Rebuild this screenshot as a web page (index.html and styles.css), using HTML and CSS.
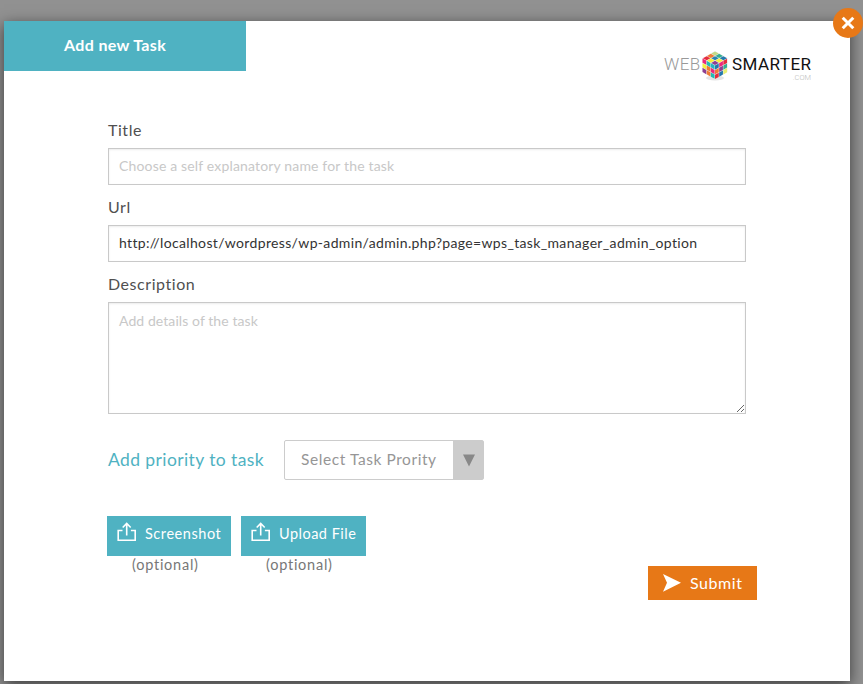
FILE: index.html
```html
<!DOCTYPE html>
<html lang="en">
<head>
<meta charset="utf-8">
<title>Add new Task</title>
<link rel="stylesheet" href="styles.css">
</head>
<body>
<div class="modal">
  <button class="close" aria-label="Close"><svg width="14" height="14" viewBox="0 0 14 14"><path d="M1.700 1.700l10.600 10.600M12.300 1.700L1.700 12.300" stroke="#fff" stroke-width="3" fill="none"/></svg></button>
  <header class="header">
    <h1 class="tab"><span>Add new Task</span></h1>
    <div class="logo">
      <span class="logo-web">WEB</span>
      <svg class="cube" width="26" height="30" viewBox="0 0 26 30">
        <ellipse cx="13" cy="27" rx="9" ry="2.5" fill="#e4e4e4"/>
        <path d="M13 0l12.5 7v14L13 28.500.5 21V7z" fill="#f2f2f2"/>
        <g transform="matrix(4.17 2.33 -4.17 2.33 13 .5)">
          <rect width=".9" height=".9" fill="#c3d987"/><rect x="1" width=".9" height=".9" fill="#35ad91"/><rect x="2" width=".9" height=".9" fill="#2378ad"/>
          <rect y="1" width=".9" height=".9" fill="#ef7b35"/><rect x="1" y="1" width=".9" height=".9" fill="#2882b0"/><rect x="2" y="1" width=".9" height=".9" fill="#f6ef3c"/>
          <rect y="2" width=".9" height=".9" fill="#e62d3d"/><rect x="1" y="2" width=".9" height=".9" fill="#f6ef3c"/><rect x="2" y="2" width=".9" height=".9" fill="#8d3f92"/>
        </g>
        <g transform="matrix(4.17 2.33 0 4.67 .5 7.500)">
          <rect width=".9" height=".9" fill="#ec287c"/><rect x="1" width=".9" height=".9" fill="#25b9b4"/><rect x="2" width=".9" height=".9" fill="#24b4c2"/>
          <rect y="1" width=".9" height=".9" fill="#f6ef3c"/><rect x="1" y="1" width=".9" height=".9" fill="#ef7b35"/><rect x="2" y="1" width=".9" height=".9" fill="#ec287c"/>
          <rect y="2" width=".9" height=".9" fill="#8d3f92"/><rect x="1" y="2" width=".9" height=".9" fill="#ef7b35"/><rect x="2" y="2" width=".9" height=".9" fill="#25b9b4"/>
        </g>
        <g transform="matrix(4.17 -2.33 0 4.67 13 14.500)">
          <rect width=".9" height=".9" fill="#2378ad"/><rect x="1" width=".9" height=".9" fill="#ec287c"/><rect x="2" width=".9" height=".9" fill="#e62d3d"/>
          <rect y="1" width=".9" height=".9" fill="#ef7b35"/><rect x="1" y="1" width=".9" height=".9" fill="#8d3f92"/><rect x="2" y="1" width=".9" height=".9" fill="#35ad91"/>
          <rect y="2" width=".9" height=".9" fill="#e62d3d"/><rect x="1" y="2" width=".9" height=".9" fill="#2378ad"/><rect x="2" y="2" width=".9" height=".9" fill="#e7ee70"/>
        </g>
      </svg>
      <span class="logo-smarter">SMARTER</span>
      <span class="logo-com">.COM</span>
    </div>
  </header>
  <form class="form">
    <label class="label l-title" for="title">Title</label>
    <input class="field" id="title" type="text" placeholder="Choose a self explanatory name for the task">
    <label class="label" for="url">Url</label>
    <input class="field url" id="url" type="text" value="http://localhost/wordpress/wp-admin/admin.php?page=wps_task_manager_admin_option">
    <label class="label l-desc" for="desc">Description</label>
    <textarea class="field area" id="desc" placeholder="Add details of the task"></textarea>
    <div class="priority">
      <span class="priority-label">Add priority to task</span>
      <div class="select"><span class="select-text">Select Task Prority</span><span class="arrow"><svg width="12" height="13" viewBox="0 0 12 13"><path d="M0 .5h12L6 12.500z" fill="#888"/></svg></span></div>
    </div>
    <div class="actions">
      <div class="upload">
        <button type="button" class="upload-btn"><svg width="20" height="20" viewBox="0 0 20 20"><path d="M5.500 8.500H1.200v9.800h17V8.500h-4.300M9.700 13.500V2M5.700 5.500l4-4 4 4" fill="none" stroke="#fff" stroke-width="1.600"/></svg><span>Screenshot</span></button>
        <span class="optional">(optional)</span>
      </div>
      <div class="upload second">
        <button type="button" class="upload-btn"><svg width="20" height="20" viewBox="0 0 20 20"><path d="M5.500 8.500H1.200v9.800h17V8.500h-4.300M9.700 13.500V2M5.700 5.500l4-4 4 4" fill="none" stroke="#fff" stroke-width="1.600"/></svg><span class="t-file">Upload File</span></button>
        <span class="optional">(optional)</span>
      </div>
      <button type="button" class="submit"><svg width="18" height="18" viewBox="0 0 18 18"><path d="M0 0l18 8.800L0 17.800l4-9z" fill="#fff"/></svg><span>Submit</span></button>
    </div>
  </form>
</div>
</body>
</html>
```
FILE: styles.css
```css
* { box-sizing: border-box; }
html, body { height: 100%; overflow: hidden; }
body { margin: 0; padding: 21px 0 0 4px; background: #919191; font-family: Lato, "Liberation Sans", sans-serif; }
button { border: 0; font: inherit; color: #fff; }
.modal { position: relative; width: 846px; height: 660px; background: #fff; box-shadow: 0 4px 14px rgba(0,0,0,.6); }
.close { position: absolute; right: -13px; top: -13px; width: 30px; height: 30px; padding: 0; border-radius: 50%; background: #e77817; display: flex; align-items: center; justify-content: center; }
.header { display: flex; justify-content: space-between; height: 100px; padding-right: 38px; }
.tab { margin: 0; width: 242px; height: 50px; padding-left: 60px; background: #4fb2c2; color: #fff; font-size: 16px; line-height: 47px; font-weight: 700; letter-spacing: .35px; white-space: nowrap; }
.logo { position: relative; display: flex; align-items: flex-start; width: 148px; margin-top: 30px; height: 32px; line-height: 27px; white-space: nowrap; font-family: Roboto, sans-serif; }
.logo-web { width: 38px; color: #999; font-size: 17px; font-weight: 300; letter-spacing: .4px; }
.cube { flex: none; }
.logo-smarter { margin: 5px 0 0 4px; color: #111; font-size: 17px; line-height: 16px; letter-spacing: .45px; }
.logo-com { position: absolute; right: 1px; top: 23px; font-size: 7.5px; line-height: 7px; font-weight: 300; color: #bbb; }
.form { display: flex; flex-direction: column; padding: 0 104px; }
.label { height: 27px; line-height: 17px; font-size: 16px; color: #505050; letter-spacing: .55px; }
.field { width: 638px; height: 37px; margin: 0 0 13px; padding: 0 10px 2px; border: 1px solid #c9c9c9; border-radius: 0; background: #fff; box-shadow: inset 0 1px 2px rgba(0,0,0,.08); color: #333; font: 14px/18px Lato, sans-serif; letter-spacing: .16px; outline: 0; }
.url { letter-spacing: .345px; }
.field::placeholder { color: #c8c8c8; opacity: 1; }
.area { height: 112px; padding-top: 9px; margin-bottom: 26px; resize: vertical; letter-spacing: .08px; }
.priority { display: flex; align-items: center; height: 40px; white-space: nowrap; }
.priority-label { width: 176px; padding-bottom: 2px; color: #4fb2c2; font-size: 17.5px; letter-spacing: .4px; }
.select { display: flex; width: 200px; height: 40px; border: 1px solid #ccc; border-radius: 2px; }
.select-text { flex: 1; padding-left: 16px; line-height: 37px; font-size: 15.5px; letter-spacing: .58px; color: #969696; }
.arrow { width: 30px; padding-left: 2px; background: #ccc; display: flex; align-items: center; justify-content: center; }
.actions { display: flex; width: 650px; margin: 36px 0 0 -1px; white-space: nowrap; }
.upload { width: 124px; margin-right: 10px; display: flex; flex-direction: column; }
.second { width: 125px; }
.upload-btn { display: flex; height: 40px; padding: 6px 0 0 10px; background: #4fb2c2; font-size: 14.5px; line-height: 24px; letter-spacing: .55px; }
.upload-btn span { margin-left: 8px; }
.upload-btn .t-file { letter-spacing: .49px; }
.optional { padding-left: 25px; font-size: 14.5px; line-height: 18px; letter-spacing: .75px; color: #777; }
.submit { display: flex; align-items: center; width: 109px; height: 34px; margin: 50px 0 0 auto; padding: 0 0 0 15px; background: #e77817; font-size: 16px; }
.submit span { margin-left: 9px; padding-bottom: 2px; letter-spacing: .55px; }
```
